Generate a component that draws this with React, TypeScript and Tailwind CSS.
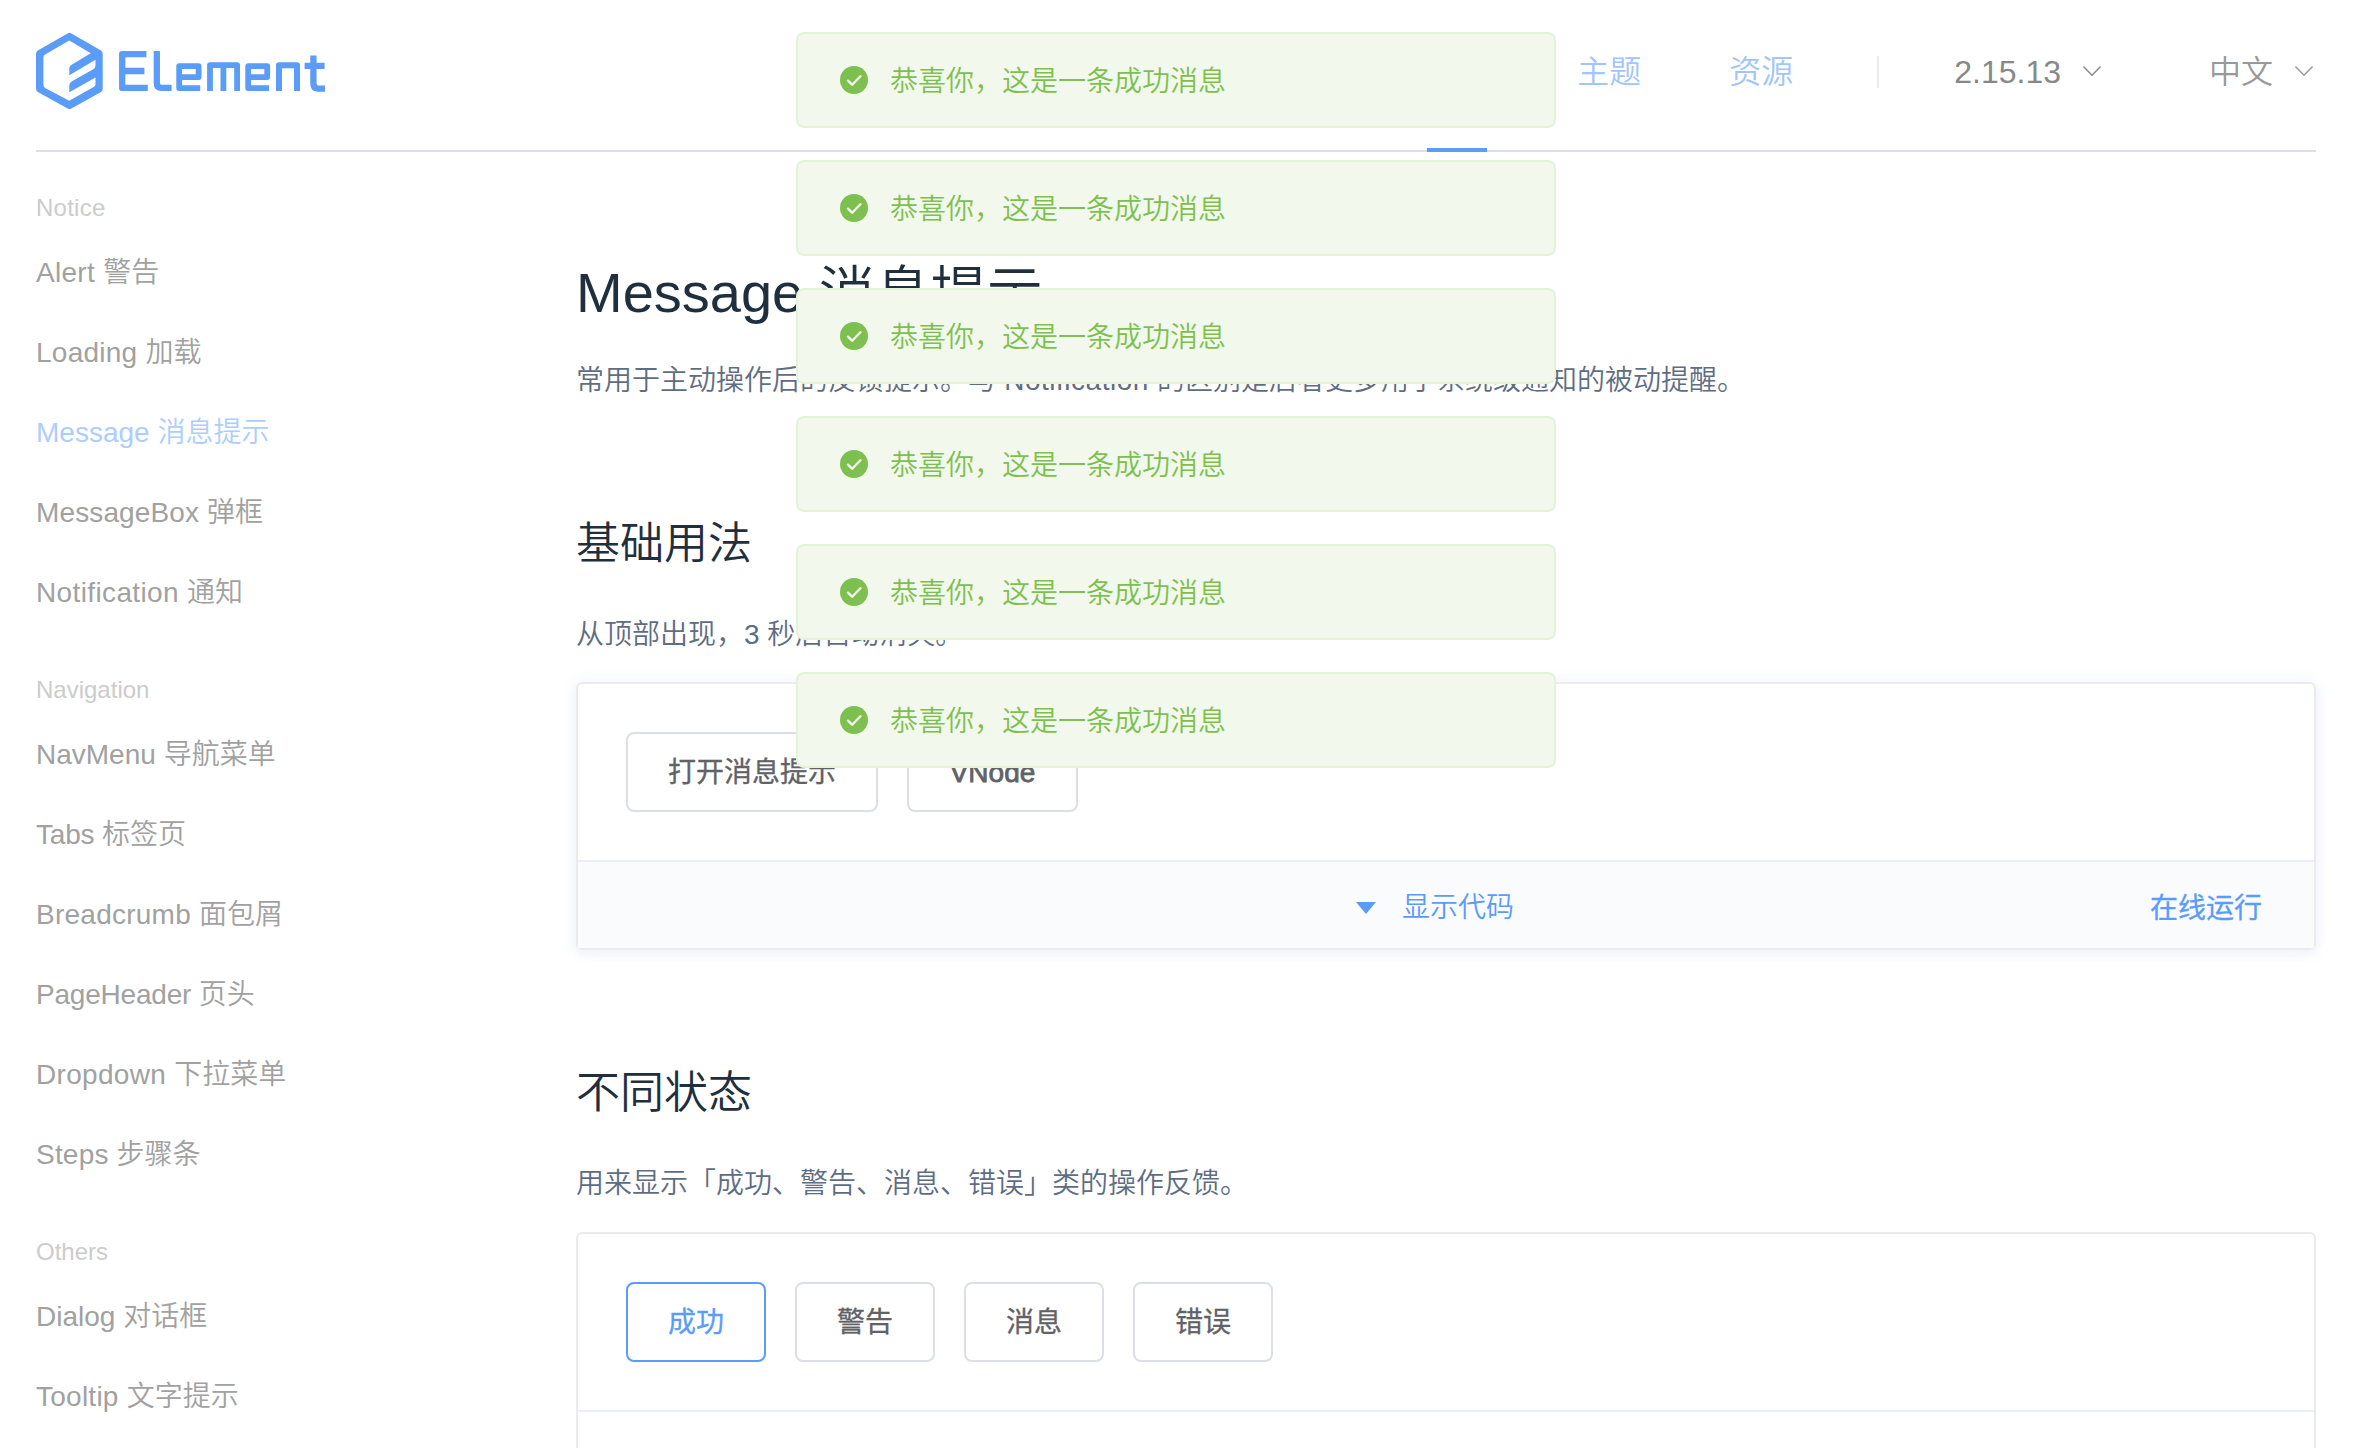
import React from 'react';

type Item = { en: string; zh: string; tracking?: string; active?: boolean };

const groups: { title: string; tracking?: string; items: Item[] }[] = [
  {
    title: 'Notice',
    tracking: 'tracking-[0.25px]',
    items: [
      { en: 'Alert', zh: '警告', tracking: 'tracking-[0.3px]' },
      { en: 'Loading', zh: '加载', tracking: 'tracking-[0.25px]' },
      { en: 'Message', zh: '消息提示', active: true },
      { en: 'MessageBox', zh: '弹框', tracking: 'tracking-[0.12px]' },
      { en: 'Notification', zh: '通知', tracking: 'tracking-[0.37px]' },
    ],
  },
  {
    title: 'Navigation',
    items: [
      { en: 'NavMenu', zh: '导航菜单' },
      { en: 'Tabs', zh: '标签页', tracking: 'tracking-[-0.2px]' },
      { en: 'Breadcrumb', zh: '面包屑', tracking: 'tracking-[0.25px]' },
      { en: 'PageHeader', zh: '页头', tracking: 'tracking-[-0.2px]' },
      { en: 'Dropdown', zh: '下拉菜单', tracking: 'tracking-[0.3px]' },
      { en: 'Steps', zh: '步骤条', tracking: 'tracking-[0.2px]' },
    ],
  },
  {
    title: 'Others',
    items: [
      { en: 'Dialog', zh: '对话框' },
      { en: 'Tooltip', zh: '文字提示', tracking: 'tracking-[0.25px]' },
    ],
  },
];

function Logo() {
  return (
    <svg className="h-[80px] w-[292px]" viewBox="0 0 292 80" fill="none" stroke="#5a9cf8">
      <path
        fill="#5a9cf8"
        stroke="none"
        fillRule="evenodd"
        d="M31.6 1.4Q33.5.3 35.4 1.4L65 18.4Q66.7 19.6 66.7 21.6V56.8Q66.7 58.8 65 60L35.4 76.4Q33.5 77.5 31.6 76.4L1.8 60Q0 58.8 0 56.8V21.6Q0 19.6 1.8 18.4ZM33.3 8.6L9.5 22.2Q7.4 23.3 7.4 25.4V53Q7.4 55.1 9.5 56.2L33.3 68.8L58 54.8Q59.5 54 59.5 52V45.6L33.3 60.3V53.4Q33.3 51 35.6 49.6L57.2 37.2Q59.5 35.8 59.5 33.2V27.8L33.3 43.2V36.4Q33.3 34.2 35.6 32.8L54.8 21.2Z"
      />
      <g strokeWidth="6.3" strokeLinejoin="round">
        <path d="M110.4 22.1H86.2V55.9H111.8M86.2 39H108.4" />
        <path d="M120.8 19V51Q120.8 55.9 125.5 55.9H135.6" />
        <path strokeWidth="5.8" d="M143.2 45.1H162.6V34.1H143.2V56.1H164.2" />
        <path strokeWidth="5.8" d="M174 59V33.1H201.1V59M187.4 33.1V59" />
        <path strokeWidth="5.8" d="M212.2 45.1H231.2V34.1H212.2V56.1H233" />
        <path strokeWidth="6" d="M243 59V33.2H261V59" />
        <path d="M277.4 23.4V51Q277.4 56.6 282 56.6H289M268.6 33.9H288.6" />
      </g>
    </svg>
  );
}

function Chevron() {
  return (
    <svg className="-mt-[3px] h-[12px] w-[20px]" viewBox="0 0 20 12" fill="none" stroke="currentColor" strokeWidth="1.4">
      <path d="M1.4 1.6L10 10.2L18.6 1.6" />
    </svg>
  );
}

function Button({ children, className = 'w-[140px]', active = false }: { children: React.ReactNode; className?: string; active?: boolean }) {
  return (
    <button
      className={`h-20 shrink-0 rounded-lg border-2 bg-white pt-[2px] text-[28px] leading-none font-normal [-webkit-text-stroke:0.3px] ${className} ${
        active ? 'border-[#5a9cf8] text-[#5a9cf8]' : 'border-[#dcdfe6] text-[#606266]'
      }`}
    >
      {children}
    </button>
  );
}

function Message() {
  return (
    <div className="flex h-24 w-[760px] items-center rounded-lg border-2 border-[#e4f2da] bg-[#f2f8ec] pl-[42px]">
      <svg className="h-7 w-7" viewBox="0 0 28 28">
        <circle cx="14" cy="14" r="14" fill="#7dc050" />
        <path d="M8 14.6L12.2 18.8L20.4 10.2" fill="none" stroke="#f2f8ec" strokeWidth="2.3" strokeLinecap="round" strokeLinejoin="round" />
      </svg>
      <p className="mt-[3px] ml-[22px] text-[28px] leading-7 text-[#7dc050]">恭喜你，这是一条成功消息</p>
    </div>
  );
}

export default function App() {
  return (
    <div className="relative h-[1448px] w-[2354px] overflow-hidden bg-white font-['Liberation_Sans','Noto_Sans_CJK_SC',sans-serif] font-[350]">
      <header className="mr-[38px] ml-9 flex h-[152px] items-start border-b-2 border-[#dcdfe6] pr-[2px]">
        <div className="pt-8">
          <Logo />
        </div>
        <nav className="ml-auto flex h-[144px] items-center text-[32px] leading-none">
          <span className="text-[#a0c6fb]">主题</span>
          <span className="ml-[88px] text-[#a0c6fb]">资源</span>
          <i className="ml-[84px] h-8 w-[2px] bg-[#ebebeb]" />
          <span className="ml-[75px] flex items-center text-[#888]">
            2.15.13
            <i className="ml-[21px]"><Chevron /></i>
          </span>
          <span className="ml-[107px] flex items-center text-[#999]">
            中文
            <i className="ml-[21px]"><Chevron /></i>
          </span>
        </nav>
      </header>
      <div className="absolute top-[148px] left-[1427px] h-1 w-[60px] bg-[#5a9cf8]" />

      <div className="flex pr-[38px] pl-9">
        <aside className="w-[540px] shrink-0 pt-[29px]">
          {groups.map((g) => (
            <section key={g.title} className="mb-[31px]">
              <h4 className={`h-[52px] text-[24px] leading-[53px] text-[#ccc] ${g.tracking ?? ''}`}>{g.title}</h4>
              <ul className="-mb-px">
                {g.items.map((t) => (
                  <li key={t.en} className={`h-20 text-[28px] leading-[80px] ${t.active ? 'text-[#acceff]' : 'text-[#a1a1a1]'}`}>
                    <span className={t.tracking ?? ''}>{t.en} </span>
                    {t.zh}
                  </li>
                ))}
              </ul>
            </section>
          ))}
        </aside>

        <main className="min-w-0 flex-1 text-[28px] text-[#5e6d82]">
          <h1 className="mt-[101px] h-20 text-[56px] leading-[80px] text-[#1f2f3d]">Message 消息提示</h1>
          <p className="mt-[28px] h-10 leading-10">
            常用于主动操作后的反馈提示。与<span className="tracking-[0.5px]"> Notification </span>的区别是后者更多用于系统级通知的被动提醒。
          </p>
          <h3 className="mt-[113px] h-[60px] text-[44px] leading-[60px] text-[#1f2f3d]">基础用法</h3>
          <p className="mt-[41px] h-10 leading-10">从顶部出现，3 秒后自动消失。</p>
          <div className="mt-[27px] h-[268px] rounded-md border-2 border-[#ebebeb] shadow-[0_0_16px_rgba(232,237,250,0.6),0_4px_8px_rgba(232,237,250,0.5)]">
            <div className="flex h-[176px] gap-[29px] p-12">
              <Button className="w-[252px]">打开消息提示</Button>
              <Button className="w-[171px]"><span className="[-webkit-text-stroke:0.8px]">VNode</span></Button>
            </div>
            <div className="flex h-[88px] items-center border-t-2 border-[#eaeefb] bg-[#fafbfd] text-[#5a9cf8]">
              <svg className="mt-[5px] ml-[778px] h-3 w-5" viewBox="0 0 20 12"><path d="M0 0H20L10 12Z" fill="#5a9cf8" /></svg>
              <span className="mt-[5px] ml-[26px]">显示代码</span>
              <span className="mt-[8px] mr-[52px] ml-auto font-normal [-webkit-text-stroke:0.3px]">在线运行</span>
            </div>
          </div>
          <h3 className="mt-[113px] h-[60px] text-[44px] leading-[60px] text-[#1f2f3d]">不同状态</h3>
          <p className="mt-[41px] h-10 leading-10">用来显示「成功、警告、消息、错误」类的操作反馈。</p>
          <div className="mt-[28px] h-[268px] rounded-md border-2 border-[#ebebeb]">
            <div className="flex h-[176px] gap-[29px] p-12">
              <Button active>成功</Button>
              <Button>警告</Button>
              <Button>消息</Button>
              <Button>错误</Button>
            </div>
            <div className="h-[88px] border-t-2 border-[#eaeefb]" />
          </div>
        </main>
      </div>

      <div className="absolute top-8 left-[796px] flex flex-col gap-8">
        {[0, 1, 2, 3, 4, 5].map((i) => (
          <Message key={i} />
        ))}
      </div>
    </div>
  );
}
